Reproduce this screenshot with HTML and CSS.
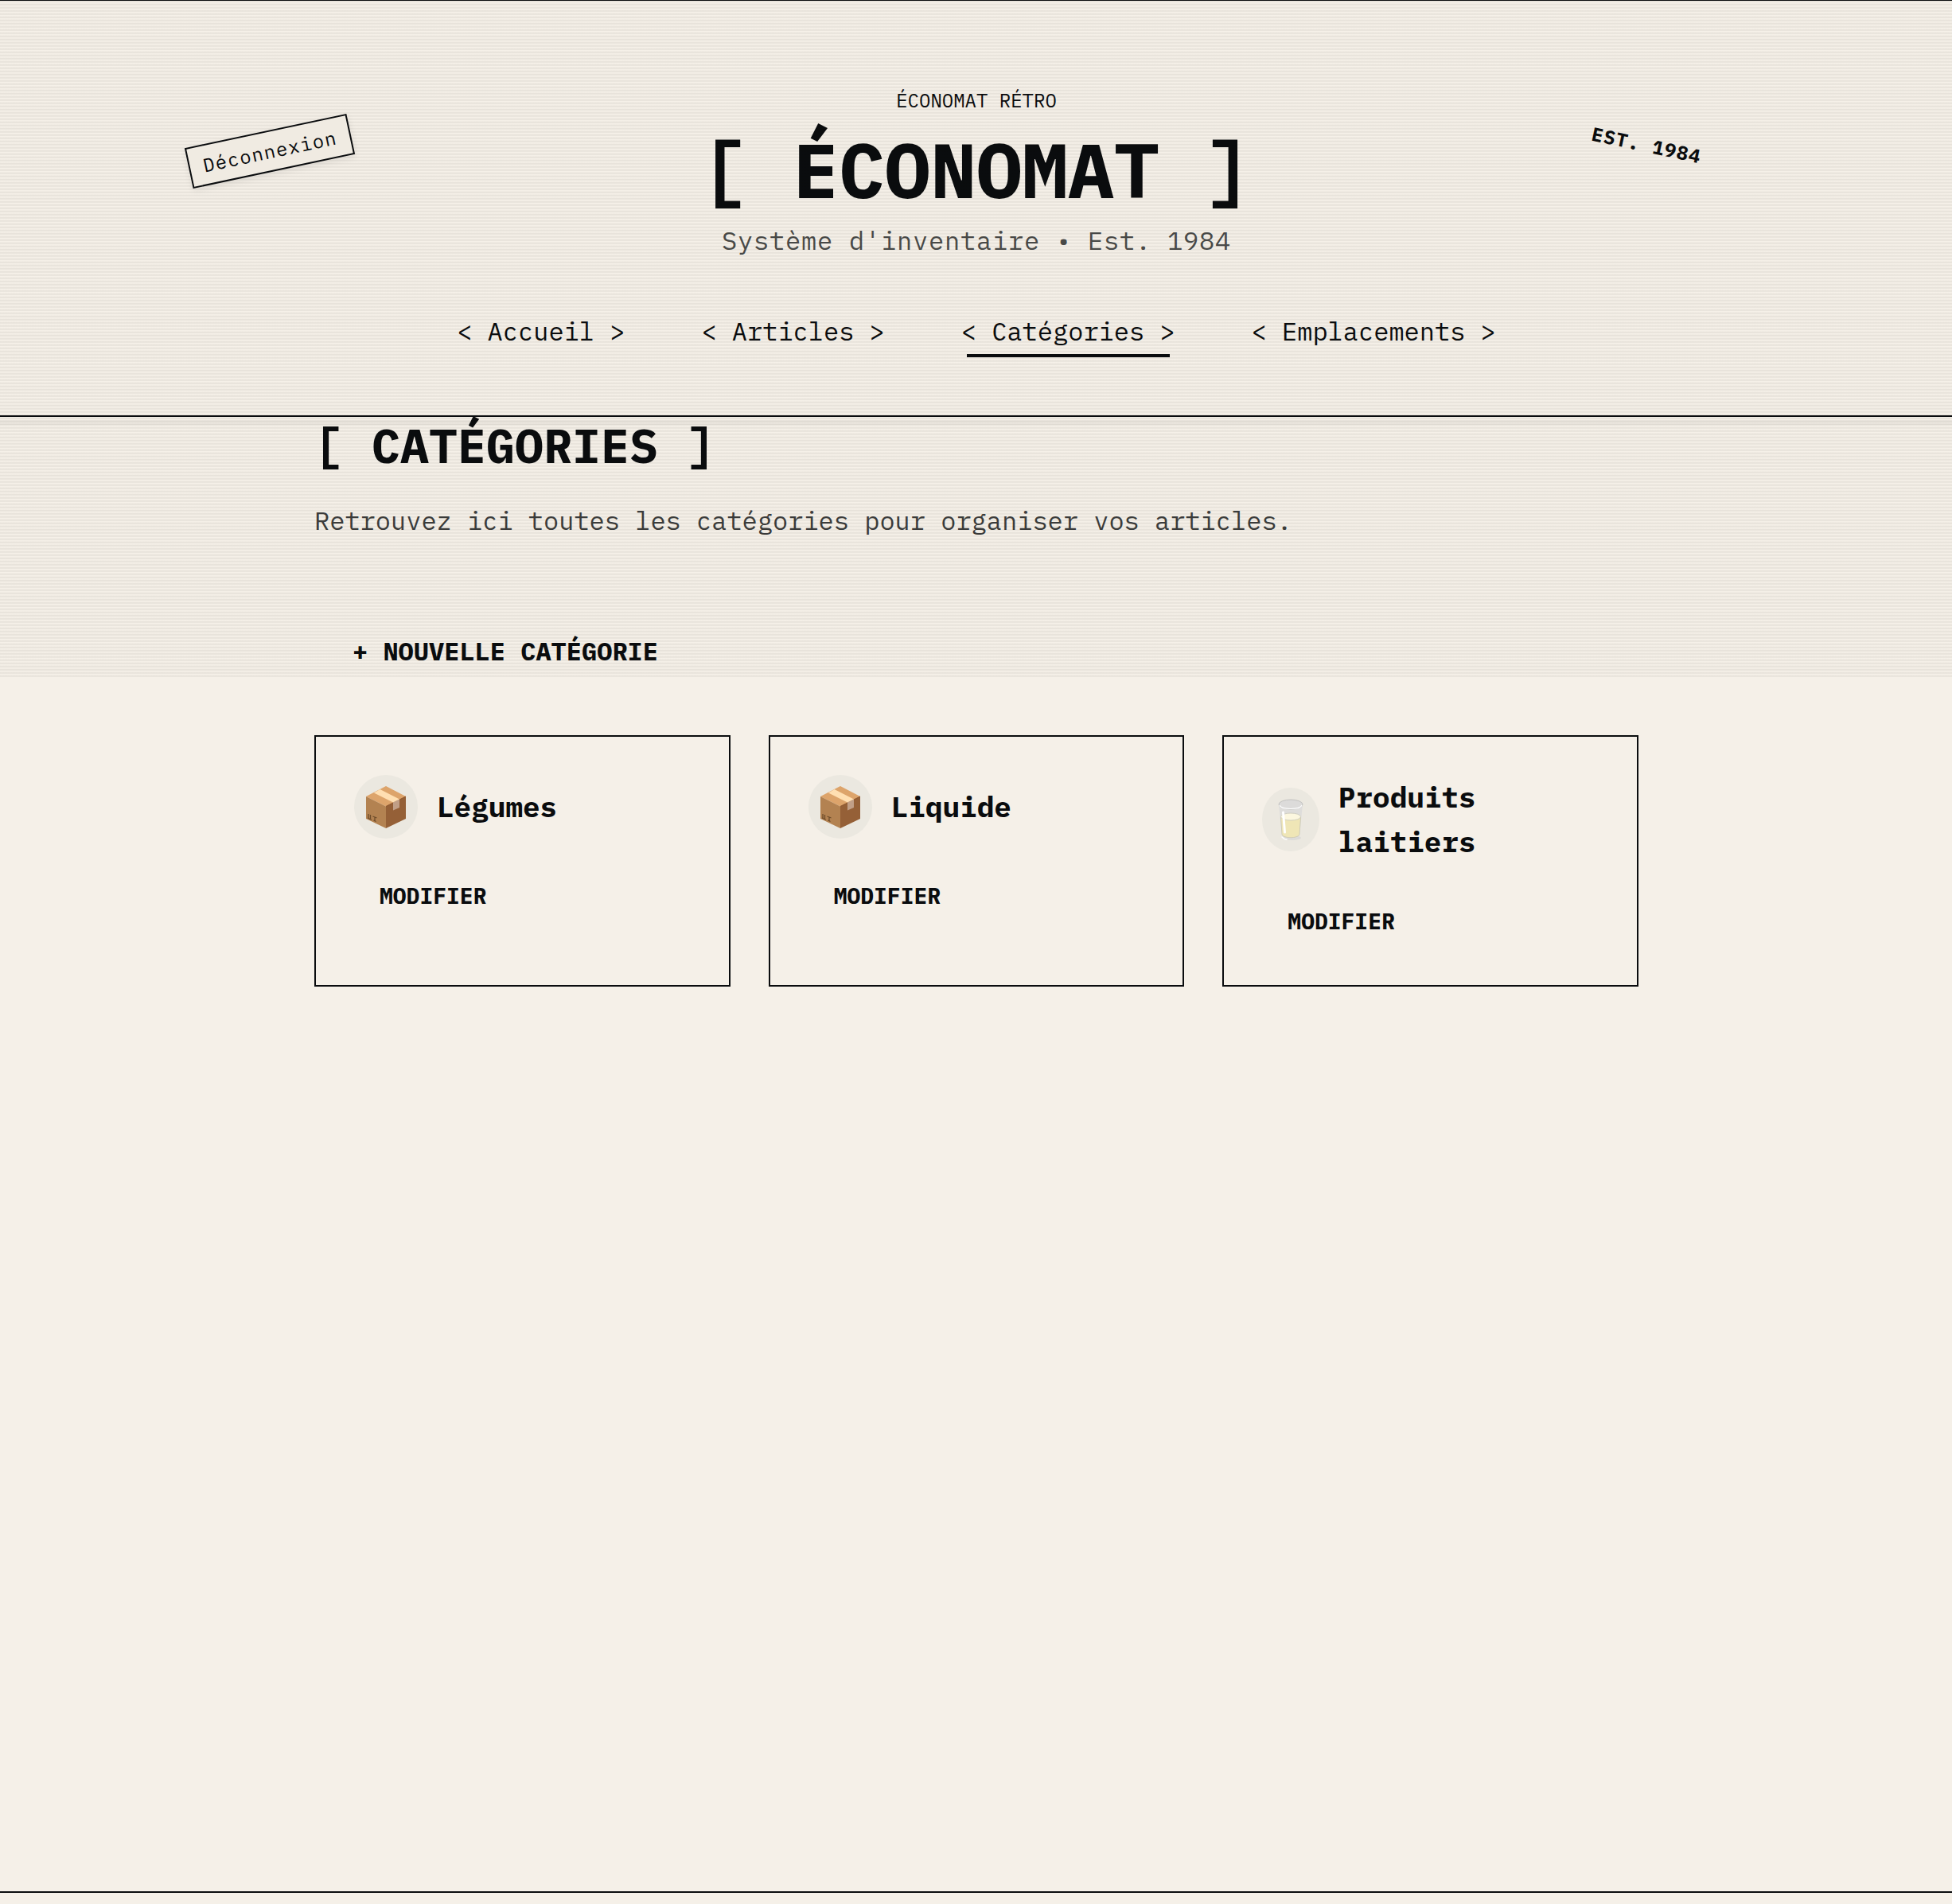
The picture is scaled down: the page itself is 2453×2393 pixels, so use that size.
FILE: index.html
```html
<!DOCTYPE html>
<html lang="fr">
<head>
<meta charset="utf-8">
<title>Économat</title>
<link rel="stylesheet" href="styles.css">
</head>
<body>
<svg class="defs" width="0" height="0" aria-hidden="true">
  <symbol id="parcel" viewBox="0 0 50 53">
    <path fill="#dda46b" d="M25 0 50 13 25 25.500 0 13z"/>
    <path fill="#b38251" d="M0 13 25 25.500V53L0 41z"/>
    <path fill="#956037" d="M50 13 25 25.500V53L50 41z"/>
    <path fill="#ffdfb2" d="M17.500 4 10 8.500 34 20.500 42 16.500z"/>
    <path fill="#c19f87" d="M34 20.500 42 16.500V27L34 30.500z"/>
    <path fill="none" stroke="#8a5229" stroke-width="1" d="M25 25.500 34 21M42 17 50 13"/>
    <path fill="none" stroke="#6f4d2b" stroke-width="1.300" d="M3 35v5M5.500 36v5M2 40l5 2.500M8.500 38l5 2M11 38.500v5.500M9.500 43l3 1.500"/>
  </symbol>
  <symbol id="milk" viewBox="0 0 32 52">
    <ellipse cx="18" cy="49" rx="11" ry="3" fill="#dcdbd8"/>
    <path fill="#dedddb" d="M1 7 5 46c1 6 20 6 22 0L31 7z"/>
    <path fill="#efe6b6" stroke="#c9c7b4" stroke-width=".8" d="M3.500 23 5 45c2 5 20 5 22 0l1.500-22z"/>
    <ellipse cx="16" cy="22.500" rx="12.500" ry="4.500" fill="#fcf7df" stroke="#c8c6bb" stroke-width=".8"/>
    <ellipse cx="16" cy="7" rx="15" ry="6" fill="#dcdbda" stroke="#c2c2c0" stroke-width="1"/>
    <path fill="none" stroke="#fff" stroke-width="1.200" d="M2 8c2 6 26 6 28 0"/>
    <path fill="none" stroke="#fff" stroke-width="3" stroke-linecap="round" d="M6.500 17 8.500 42"/>
    <path fill="none" stroke="#fff" stroke-width="1.500" stroke-linecap="round" d="M5 48q3 3 6 3"/>
  </symbol>
</svg>
<header class="site-header">
  <a class="logout" href="#">Déconnexion</a>
  <span class="stamp">EST. 1984</span>
  <p class="kicker">ÉCONOMAT RÉTRO</p>
  <h1 class="brand">[ ÉCONOMAT ]</h1>
  <p class="tagline">Système d'inventaire • Est. 1984</p>
  <nav class="nav">
    <a class="nav-link" href="#">&lt; Accueil &gt;</a>
    <a class="nav-link" href="#">&lt; Articles &gt;</a>
    <a class="nav-link active" href="#">&lt; Catégories &gt;</a>
    <a class="nav-link" href="#">&lt; Emplacements &gt;</a>
  </nav>
</header>
<main class="content">
  <h2 class="page-title">[ CATÉGORIES ]</h2>
  <p class="intro">Retrouvez ici toutes les catégories pour organiser vos articles.</p>
  <a class="new-button" href="#">+ NOUVELLE CATÉGORIE</a>
  <section class="grid">
    <article class="card">
      <div class="card-head"><span class="icon"><svg width="50" height="53"><use href="#parcel"/></svg></span><h3 class="card-title">Légumes</h3></div>
      <a class="edit" href="#">MODIFIER</a>
    </article>
    <article class="card">
      <div class="card-head"><span class="icon"><svg width="50" height="53"><use href="#parcel"/></svg></span><h3 class="card-title">Liquide</h3></div>
      <a class="edit" href="#">MODIFIER</a>
    </article>
    <article class="card">
      <div class="card-head"><span class="icon narrow"><svg width="32" height="52"><use href="#milk"/></svg></span><h3 class="card-title">Produits laitiers</h3></div>
      <a class="edit" href="#">MODIFIER</a>
    </article>
  </section>
</main>
<footer class="site-footer"></footer>
<div class="scanlines"></div>
</body>
</html>
```
FILE: styles.css
```css
html { overflow: hidden; }
* { box-sizing: border-box; }
body {
  margin: 0;
  width: 2454px;
  height: 2393px;
  display: flex;
  flex-direction: column;
  overflow: hidden;
  background: #f5f0e8;
  color: #0a0c0e;
  font-family: "IBM Plex Mono", "Liberation Mono", monospace;
  font-size: 32px;
}
h1, h2, h3, p { margin: 0; }
h1, h2, h3 { font-weight: 700; }
a { color: inherit; text-decoration: none; }
.defs { position: absolute; }

.site-header {
  position: relative;
  height: 524px;
  flex: none;
  padding-top: 107px;
  border-top: 1px solid #0a0c0e;
  border-bottom: 2px solid #0a0c0e;
  text-align: center;
}
.site-header::after {
  content: "";
  position: absolute;
  left: 0;
  right: 0;
  bottom: -12px;
  height: 6px;
  background: rgba(0, 0, 0, .035);
}
.kicker { font-size: 24px; line-height: 36px; }
.brand { margin-top: 9px; font-size: 96px; line-height: 120px; }
.tagline { margin-top: 5px; line-height: 48px; letter-spacing: .8px; color: #4a4b49; }
.nav { display: flex; justify-content: center; gap: 96px; margin-top: 66px; }
.nav-link { position: relative; line-height: 48px; }
.nav-link.active::after {
  content: "";
  position: absolute;
  left: 7px;
  right: 7px;
  top: 53px;
  height: 4px;
  background: #0a0c0e;
}
.logout {
  position: absolute;
  z-index: 2;
  left: 235px;
  top: 163px;
  width: 208px;
  height: 52px;
  border: 2px solid #0a0c0e;
  background: #f0ebe2;
  box-shadow: 0 3px 8px rgba(0, 0, 0, .08);
  font-size: 24px;
  line-height: 48px;
  letter-spacing: 1.2px;
  transform: rotate(-12deg);
}
.stamp {
  position: absolute;
  left: 1999px;
  top: 163px;
  font-size: 24px;
  line-height: 36px;
  font-weight: 700;
  letter-spacing: 1.2px;
  transform: rotate(12deg);
}

.content { width: 1664px; margin: 0 auto; flex: 1; }
.page-title { font-size: 60px; line-height: 72px; }
.intro { margin-top: 34px; line-height: 48px; color: #3c3d3c; }
.new-button { display: block; width: max-content; margin: 116px 0 0 48px; line-height: 48px; font-weight: 700; }
.grid { display: grid; grid-template-columns: repeat(3, 1fr); gap: 48px; margin-top: 82px; }
.card { height: 316px; padding: 48px; border: 2px solid #0a0c0e; }
.card-head { display: flex; align-items: center; gap: 24px; min-height: 80px; }
.icon {
  width: 80px;
  height: 80px;
  flex: none;
  display: flex;
  align-items: center;
  justify-content: center;
  border-radius: 50%;
  background: #ebe8e0;
}
.icon.narrow { width: 71.500px; }
.card-title { width: min-content; font-size: 36px; line-height: 56px; }
.edit { display: block; margin: 51px 0 0 32px; font-size: 28px; line-height: 42px; font-weight: 700; }

.site-footer { height: 16px; flex: none; border-top: 2px solid #0a0c0e; }

.scanlines {
  position: absolute;
  left: 0;
  top: 0;
  width: 100%;
  height: 851px;
  pointer-events: none;
  background: repeating-linear-gradient(
    to bottom,
    rgba(10, 8, 0, .02) 0 1px,
    rgba(10, 8, 0, .055) 1px 2px,
    rgba(10, 8, 0, .045) 2px 3px,
    transparent 3px 4px
  );
}
```
